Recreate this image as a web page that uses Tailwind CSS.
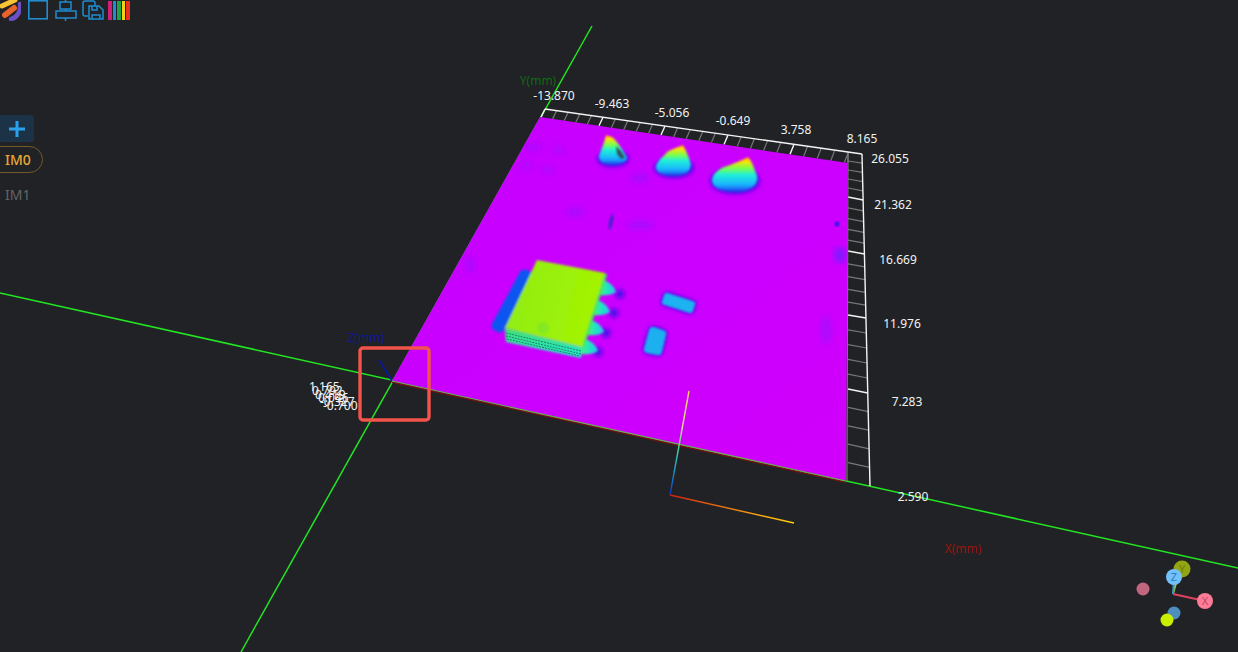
<!DOCTYPE html>
<html>
<head>
  <meta charset="UTF-8">
  <script src="https://cdn.jsdelivr.net/npm/@tailwindcss/browser@4"></script>
</head>
<body class="bg-[#202225] overflow-hidden">
<div class="relative w-[1238px] h-[652px] overflow-hidden bg-[#202225] font-['Noto_Sans',sans-serif]">

  <!-- 3D view -->
  <svg class="absolute inset-0" width="1238" height="652" viewBox="0 0 1238 652" font-family="'Noto Sans', sans-serif">
    <defs>
      <filter id="b1"><feGaussianBlur stdDeviation="0.8"/></filter>
      <filter id="b2"><feGaussianBlur stdDeviation="2"/></filter>
      <filter id="b3"><feGaussianBlur stdDeviation="3"/></filter>
      <linearGradient id="plane" x1="0" y1="0" x2="1" y2="1">
        <stop offset="0" stop-color="#c400ff"/>
        <stop offset="0.5" stop-color="#cb00ff"/>
        <stop offset="1" stop-color="#d000fb"/>
      </linearGradient>
      <linearGradient id="cone" x1="0" y1="0" x2="0" y2="1">
        <stop offset="0" stop-color="#ff8a20"/>
        <stop offset="0.12" stop-color="#ffe400"/>
        <stop offset="0.34" stop-color="#70ff50"/>
        <stop offset="0.5" stop-color="#20f0d8"/>
        <stop offset="0.8" stop-color="#18b0ff"/>
        <stop offset="1" stop-color="#2430e8"/>
      </linearGradient>
      <linearGradient id="top" x1="0" y1="0" x2="1" y2="0.2">
        <stop offset="0" stop-color="#8eec18"/>
        <stop offset="1" stop-color="#a4f400"/>
      </linearGradient>
      <linearGradient id="side" x1="0" y1="0" x2="0" y2="1">
        <stop offset="0" stop-color="#3fe070"/>
        <stop offset="1" stop-color="#20e8d0"/>
      </linearGradient>
      <linearGradient id="lead" x1="0" y1="0" x2="1" y2="0">
        <stop offset="0" stop-color="#60f050"/>
        <stop offset="0.5" stop-color="#25e8b8"/>
        <stop offset="1" stop-color="#20c8f0"/>
      </linearGradient>
      <linearGradient id="axisY" gradientUnits="userSpaceOnUse" x1="670" y1="495" x2="689" y2="391">
        <stop offset="0" stop-color="#1030c0"/>
        <stop offset="0.3" stop-color="#20b0c0"/>
        <stop offset="0.5" stop-color="#60e080"/>
        <stop offset="0.65" stop-color="#e0d8a0"/>
        <stop offset="1" stop-color="#f0d060"/>
      </linearGradient>
      <linearGradient id="axisX" gradientUnits="userSpaceOnUse" x1="670" y1="495" x2="794" y2="523">
        <stop offset="0" stop-color="#d02010"/>
        <stop offset="0.5" stop-color="#f08010"/>
        <stop offset="1" stop-color="#ffd010"/>
      </linearGradient>
    </defs>

    <!-- axes -->
    <line x1="0" y1="293" x2="1238" y2="568" stroke="#22e622" stroke-width="1.5"/>
    <line x1="592" y1="26" x2="241" y2="652" stroke="#22e622" stroke-width="1.5"/>
    <line x1="392" y1="381" x2="379" y2="360" stroke="#0a1a9a" stroke-width="1.8"/>

    <!-- grid walls, filled by the script below -->
    <g id="grid" fill="none"></g>

    <!-- height map -->
    <polygon points="540,117 848,163 846,481 392,381" fill="url(#plane)"/>
    <line x1="392" y1="382.4" x2="846" y2="482.4" stroke="#7a1010" stroke-width="1.3"/>
    <line x1="392" y1="381" x2="846" y2="481" stroke="#74a85c" stroke-width="1.2"/>

    <!-- surface smudges -->
    <g filter="url(#b3)" fill="#8a18ff" opacity="0.55">
      <ellipse cx="534" cy="147" rx="8" ry="3"/>
      <ellipse cx="558" cy="150" rx="6" ry="3"/>
      <ellipse cx="526" cy="166" rx="6" ry="3"/>
      <ellipse cx="548" cy="170" rx="6" ry="3"/>
      <ellipse cx="575" cy="212" rx="10" ry="4"/>
      <ellipse cx="640" cy="225" rx="14" ry="4"/>
      <ellipse cx="640" cy="178" rx="10" ry="4"/>
      <ellipse cx="826" cy="330" rx="5" ry="14"/>
      <ellipse cx="470" cy="265" rx="4" ry="8"/>
    </g>
    <ellipse cx="840" cy="255" rx="6" ry="8" fill="#6a20ff" opacity="0.8" filter="url(#b3)"/>
    <ellipse cx="611" cy="222" rx="2" ry="8" transform="rotate(12 611 222)" fill="#4a20d0" filter="url(#b1)"/>
    <circle cx="837" cy="224" r="2.5" fill="#2a18f0" filter="url(#b1)"/>

    <!-- cones -->
    <g filter="url(#b2)" fill="#4a10e8">
      <ellipse cx="613" cy="159" rx="16" ry="8"/>
      <ellipse cx="674" cy="168" rx="20" ry="10"/>
      <ellipse cx="735" cy="181" rx="25" ry="13"/>
    </g>
    <g filter="url(#b1)" fill="url(#cone)">
      <path d="M599 156C601 150 604 144 606 135L612 137C618 142 624 152 627 158C626 163 618 165 612 165C604 165 599 162 599 156Z"/>
      <path d="M656 167C657 160 664 157 667 152C672 149 678 147 683 145C686 150 688 156 690 161C693 170 686 176 674 176C663 176 656 173 656 167Z"/>
      <path d="M712 180C713 172 722 167 730 165C738 162 744 159 748 157C752 161 754 168 757 176C759 186 748 192 735 192C722 192 712 188 712 180Z"/>
    </g>
    <path d="M616 146l5 5 4 7-4 1-4-5z" fill="#30505a" filter="url(#b1)"/>

    <!-- chip with leads and pads -->
    <g filter="url(#b2)" fill="#4a10e8">
      <circle cx="620" cy="294" r="4.5"/>
      <circle cx="614" cy="313" r="4.5"/>
      <circle cx="606" cy="333" r="4.5"/>
      <circle cx="598" cy="352" r="4.5"/>
      <polygon points="667,296 692,304 690,310 665,302" stroke="#4a10e8" stroke-width="8" stroke-linejoin="round"/>
      <polygon points="653,331 662,334 658,351 648,349" stroke="#4a10e8" stroke-width="10" stroke-linejoin="round"/>
    </g>
    <g filter="url(#b1)">
      <polygon points="524,274 527,275 500,328 496,326" fill="#0f55f0" stroke="#0f55f0" stroke-width="9" stroke-linejoin="round"/>
      <path d="M600 280C608 280 614 286 616 292C610 296 602 296 596 294Z" fill="url(#lead)"/>
      <path d="M594 300C602 300 608 306 610 312C604 316 596 316 590 314Z" fill="url(#lead)"/>
      <path d="M588 320C596 320 602 326 604 332C598 336 590 336 584 334Z" fill="url(#lead)"/>
      <path d="M582 339C590 339 596 345 598 351C592 355 584 355 578 353Z" fill="url(#lead)"/>
      <polygon points="667,296 692,304 690,310 665,302" fill="#1fb4f0" stroke="#1fb4f0" stroke-width="6" stroke-linejoin="round"/>
      <polygon points="653,331 662,334 658,351 648,349" fill="#1fb0f0" stroke="#1fb0f0" stroke-width="8" stroke-linejoin="round"/>
      <polygon points="505,328 582,347 581,358 506,342" fill="url(#side)"/>
      <polygon points="537,260 605,273 582,347 505,328" fill="url(#top)"/>
      <line x1="606" y1="274" x2="583" y2="347" stroke="#4ae850" stroke-width="2.5"/>
    </g>
    <circle cx="543" cy="328" r="6" fill="#84e824" filter="url(#b1)"/>
    <g stroke="#23806e" stroke-width="1" stroke-dasharray="2 1">
      <line x1="506" y1="333" x2="581" y2="351"/>
      <line x1="506" y1="336" x2="581" y2="354"/>
      <line x1="507" y1="339" x2="580" y2="356"/>
    </g>

    <!-- small origin triad -->
    <line x1="670" y1="495" x2="689" y2="391" stroke="url(#axisY)" stroke-width="1.4"/>
    <line x1="670" y1="495" x2="794" y2="523" stroke="url(#axisX)" stroke-width="1.4"/>

    <!-- highlight box -->
    <rect x="360" y="348" width="69" height="72" rx="3" fill="none" stroke="#f2534b" stroke-width="3.4"/>

    <!-- axis titles -->
    <g font-size="12">
      <text x="538" y="85" text-anchor="middle" fill="#0f6a12">Y(mm)</text>
      <text x="366" y="342" text-anchor="middle" fill="#10189a">Z(mm)</text>
      <text x="963" y="553" text-anchor="middle" fill="#9a1510">X(mm)</text>
    </g>

    <!-- tick labels -->
    <g font-size="12" fill="#f2f2f2" text-anchor="middle">
      <text x="554" y="100">-13.870</text>
      <text x="612" y="108">-9.463</text>
      <text x="672" y="117">-5.056</text>
      <text x="733" y="125">-0.649</text>
      <text x="796" y="134">3.758</text>
      <text x="862" y="143">8.165</text>
      <text x="890" y="163">26.055</text>
      <text x="893" y="209">21.362</text>
      <text x="898" y="264">16.669</text>
      <text x="902" y="328">11.976</text>
      <text x="907" y="406">7.283</text>
      <text x="913" y="501">2.590</text>
    </g>
    <g font-size="12" fill="#f2f2f2">
      <text x="309" y="391">1.165</text>
      <text x="312" y="395">0.792</text>
      <text x="315" y="399">0.419</text>
      <text x="318" y="402">0.046</text>
      <text x="320" y="406">-0.327</text>
      <text x="323" y="410">-0.700</text>
    </g>

    <!-- orientation gizmo -->
    <g>
      <circle cx="1182" cy="569" r="8.5" fill="#94a512"/>
      <line x1="1173" y1="594" x2="1179" y2="572" stroke="#a0d020" stroke-width="2"/>
      <line x1="1173" y1="594" x2="1205" y2="601" stroke="#e04060" stroke-width="2"/>
      <line x1="1173" y1="594" x2="1174" y2="577" stroke="#3a90e0" stroke-width="2"/>
      <circle cx="1143" cy="589" r="6.5" fill="#c2657f"/>
      <circle cx="1174" cy="613" r="6.5" fill="#4d8ebf"/>
      <circle cx="1167" cy="620" r="6.5" fill="#c9ef00"/>
      <circle cx="1205" cy="601" r="8" fill="#ff7b97"/>
      <circle cx="1174" cy="577" r="8" fill="#72c1fb"/>
      <text x="1182" y="573" font-size="11" text-anchor="middle" fill="#70800a">Y</text>
      <text x="1205" y="605" font-size="11" text-anchor="middle" fill="#b84a66">X</text>
      <text x="1174" y="581" font-size="11" text-anchor="middle" fill="#2f7db8">Z</text>
    </g>
  </svg>

  <!-- toolbar -->
  <div class="relative flex items-start gap-[7px] h-[21px]">
    <svg width="21" height="21" viewBox="0 0 21 21" fill="none" stroke-linecap="round">
      <path d="M15 0L2 6" stroke="#f7c531" stroke-width="5"/>
      <path d="M14 8L5 15" stroke="#e8622c" stroke-width="6"/>
      <path d="M20 4C21 11 17 18 11 19" stroke="#6d4fc4" stroke-width="4.5"/>
    </svg>
    <svg width="20" height="20" viewBox="0 0 20 20" fill="none" stroke="#1f8dcf" stroke-width="1.6">
      <rect x="0.8" y="0.8" width="18.4" height="18"/>
    </svg>
    <svg width="22" height="21" viewBox="0 0 22 21" fill="none" stroke="#1f8dcf" stroke-width="1.5">
      <rect x="5" y="2" width="11" height="7"/>
      <rect x="1" y="11" width="20" height="7"/>
      <path d="M10.5 0V2M10.5 9V11M10.5 18V21"/>
    </svg>
    <svg width="22" height="20" viewBox="0 0 22 20" fill="none" stroke="#1f8dcf" stroke-width="1.5" class="ml-[-2px]">
      <path d="M6 16H3Q1 16 1 14V3Q1 1 3 1H11Q13 1 13 3V6"/>
      <path d="M7 6H17L21 10V19H7Z"/>
      <path d="M10 19V15H18V19M10 6V10H15V6"/>
    </svg>
    <div class="flex gap-[1px] w-[22px] h-[19px] ml-[-3px] mt-[1px]">
      <div class="flex-1 bg-[#cf2079]"></div>
      <div class="flex-1 bg-[#1f8dcf]"></div>
      <div class="flex-1 bg-[#1fa346]"></div>
      <div class="flex-1 bg-[#f0d312]"></div>
      <div class="flex-1 bg-[#e8321f]"></div>
    </div>
  </div>

  <!-- image list -->
  <div class="relative mt-[94px] flex flex-col items-start w-[44px]">
    <button class="flex items-center justify-center w-[34px] h-[27px] bg-[#1b3247] rounded-r-[3px]">
      <svg width="16" height="16" viewBox="0 0 16 16" stroke="#2aa1e8" stroke-width="3"><path d="M8 0V16M0 8H16"/></svg>
    </button>
    <div class="mt-[4px] ml-[-14px] w-[57px] h-[27px] pl-[18px] flex items-center rounded-full border border-[#75592c] text-[14px] font-medium text-[#e8a634]">IM0</div>
    <div class="mt-[12px] ml-[5px] text-[14px] leading-[20px] text-[#636568]">IM1</div>
  </div>
</div>

<script>
  // back and side walls of the measuring box
  const grid = document.getElementById('grid');
  function tick(x1, y1, x2, y2, major) {
    const l = document.createElementNS('http://www.w3.org/2000/svg', 'line');
    l.setAttribute('x1', x1); l.setAttribute('y1', y1);
    l.setAttribute('x2', x2); l.setAttribute('y2', y2);
    l.setAttribute('stroke', major ? '#f4f4f4' : '#777');
    l.setAttribute('stroke-width', major ? 1.4 : 1.2);
    grid.appendChild(l);
  }
  // x along the top rim
  const topX = [545, 603, 665, 728, 794, 862];
  for (let i = 0; i < 5; i++) {
    for (let j = 0; j < 5; j++) {
      const x = topX[i] + (topX[i + 1] - topX[i]) * j / 5;
      const y = 109 + (x - 545) * 0.142;
      const ix = x - 4;
      tick(x, y, ix, 117 + (ix - 540) * 0.1495, j === 0);
    }
  }
  tick(848, 152, 848, 163, false);
  // y along the right wall: inner edge, outer edge
  const inner = [152, 197, 251, 315, 389, 481];
  const outer = [154, 200, 254, 318, 393, 486];
  const outerX = y => 862 + (y - 154) * 8 / 332;
  for (let i = 0; i < 5; i++) {
    for (let j = 0; j < 5; j++) {
      if (i === 0 && j === 0) continue;
      const a = inner[i] + (inner[i + 1] - inner[i]) * j / 5;
      const b = outer[i] + (outer[i + 1] - outer[i]) * j / 5;
      tick(848, a, outerX(b), b, j === 0);
    }
  }
  tick(848, 152, 847, 481, false);
  tick(862, 154, 870, 486, true);
  tick(545, 109, 862, 154, true);
</script>
</body>
</html>
